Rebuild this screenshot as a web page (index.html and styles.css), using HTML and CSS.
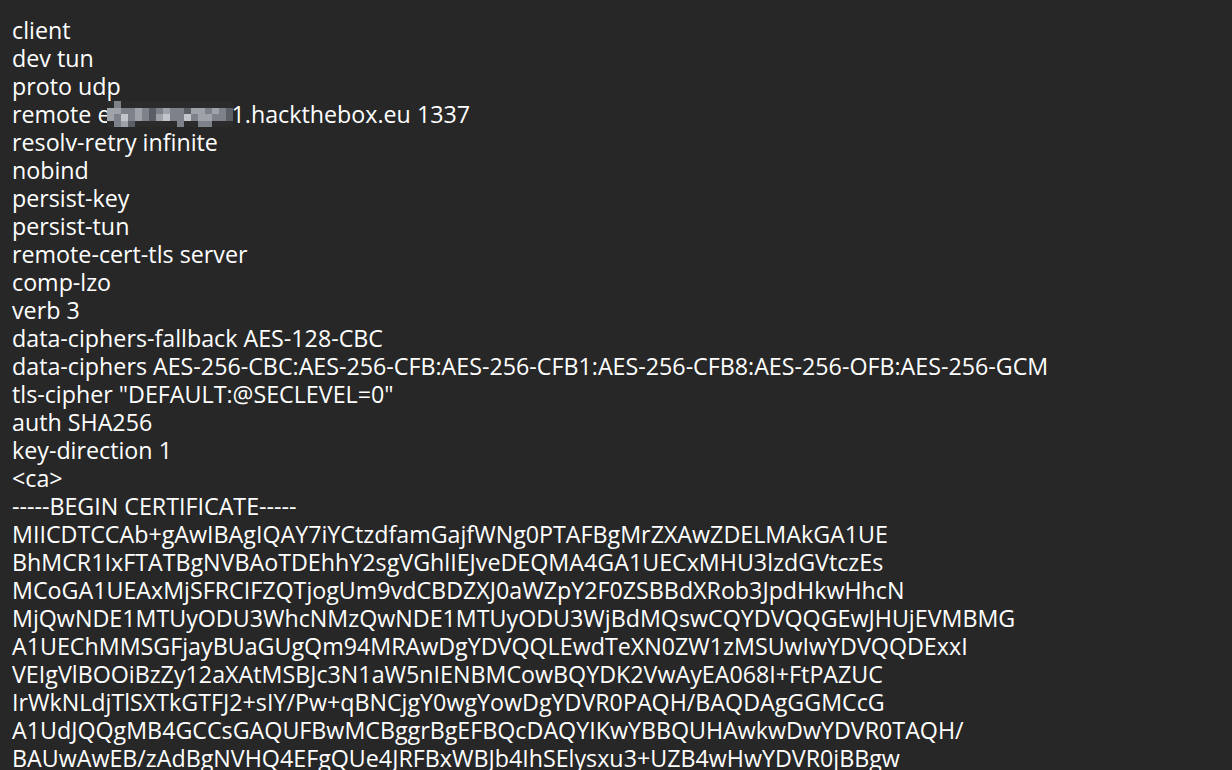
FILE: index.html
```html
<!DOCTYPE html>
<html>
<head>
<meta charset="utf-8">
<link rel="stylesheet" href="styles.css">
</head>
<body>
<div class="doc">
<div class="line">client</div>
<div class="line">dev tun</div>
<div class="line">proto udp</div>
<div class="line">remote e<span class="mosaic"><i class="c0"></i><i class="c2"></i><i class="c0"></i><i class="c0"></i><i class="c0"></i><i class="c0"></i><i class="c0"></i><i class="c0"></i><i class="c0"></i><i class="c0"></i><i class="c0"></i><i class="c0"></i><i class="c0"></i><i class="c0"></i><i class="c0"></i><i class="c0"></i><i class="c0"></i><i class="c0"></i><i class="c3"></i><i class="c3"></i><i class="c2"></i><i class="c2"></i><i class="c3"></i><i class="c2"></i><i class="c1"></i><i class="c2"></i><i class="c3"></i><i class="c2"></i><i class="c2"></i><i class="c1"></i><i class="c3"></i><i class="c3"></i><i class="c2"></i><i class="c3"></i><i class="c2"></i><i class="c1"></i><i class="c3"></i><i class="c2"></i><i class="c4"></i><i class="c2"></i><i class="c3"></i><i class="c2"></i><i class="c1"></i><i class="c3"></i><i class="c4"></i><i class="c2"></i><i class="c2"></i><i class="c4"></i><i class="c2"></i><i class="c3"></i><i class="c3"></i><i class="c2"></i><i class="c2"></i><i class="c1"></i><i class="c0"></i><i class="c2"></i><i class="c3"></i><i class="c1"></i><i class="c0"></i><i class="c0"></i><i class="c0"></i><i class="c0"></i><i class="c0"></i><i class="c0"></i><i class="c2"></i><i class="c0"></i><i class="c0"></i><i class="c2"></i><i class="c2"></i><i class="c0"></i><i class="c0"></i><i class="c0"></i></span>1.hackthebox.eu 1337</div>
<div class="line">resolv-retry infinite</div>
<div class="line">nobind</div>
<div class="line">persist-key</div>
<div class="line">persist-tun</div>
<div class="line">remote-cert-tls server</div>
<div class="line">comp-lzo</div>
<div class="line">verb 3</div>
<div class="line">data-ciphers-fallback AES-128-CBC</div>
<div class="line">data-ciphers AES-256-CBC:AES-256-CFB:AES-256-CFB1:AES-256-CFB8:AES-256-OFB:AES-256-GCM</div>
<div class="line">tls-cipher "DEFAULT:@SECLEVEL=0"</div>
<div class="line">auth SHA256</div>
<div class="line">key-direction 1</div>
<div class="line">&lt;ca&gt;</div>
<div class="line">-----BEGIN CERTIFICATE-----</div>
<div class="line">MIICDTCCAb+gAwIBAgIQAY7iYCtzdfamGajfWNg0PTAFBgMrZXAwZDELMAkGA1UE</div>
<div class="line">BhMCR1IxFTATBgNVBAoTDEhhY2sgVGhlIEJveDEQMA4GA1UECxMHU3lzdGVtczEs</div>
<div class="line">MCoGA1UEAxMjSFRCIFZQTjogUm9vdCBDZXJ0aWZpY2F0ZSBBdXRob3JpdHkwHhcN</div>
<div class="line">MjQwNDE1MTUyODU3WhcNMzQwNDE1MTUyODU3WjBdMQswCQYDVQQGEwJHUjEVMBMG</div>
<div class="line">A1UEChMMSGFjayBUaGUgQm94MRAwDgYDVQQLEwdTeXN0ZW1zMSUwIwYDVQQDExxI</div>
<div class="line">VEIgVlBOOiBzZy12aXAtMSBJc3N1aW5nIENBMCowBQYDK2VwAyEA068I+FtPAZUC</div>
<div class="line">IrWkNLdjTlSXTkGTFJ2+sIY/Pw+qBNCjgY0wgYowDgYDVR0PAQH/BAQDAgGGMCcG</div>
<div class="line">A1UdJQQgMB4GCCsGAQUFBwMCBggrBgEFBQcDAQYIKwYBBQUHAwkwDwYDVR0TAQH/</div>
<div class="line">BAUwAwEB/zAdBgNVHQ4EFgQUe4JRFBxWBJb4IhSElysxu3+UZB4wHwYDVR0jBBgw</div>
</div>
</body>
</html>
```

FILE: styles.css
```css
html, body {
  margin: 0;
  padding: 0;
  background: #272727;
  overflow: hidden;
  height: 770px;
}
.doc {
  padding: 16px 0 0 12px;
  font-family: "Open Sans", "Noto Sans", sans-serif;
  font-size: 23.25px;
  line-height: 28px;
  color: #ffffff;
}
.line {
  height: 28px;
  white-space: pre;
}
.mosaic {
  display: inline-grid;
  grid-template-columns: repeat(18, 7px);
  grid-template-rows: repeat(4, 6.5px);
  vertical-align: top;
  margin: 1px -1px 0 -4px;
  filter: blur(0.7px);
}
.mosaic i {
  display: block;
}
.mosaic .c0 { background: #2b2b2c; }
.mosaic .c1 { background: #5a5e65; }
.mosaic .c2 { background: #7d828a; }
.mosaic .c3 { background: #9ea3aa; }
.mosaic .c4 { background: #c2c6ca; }
```
